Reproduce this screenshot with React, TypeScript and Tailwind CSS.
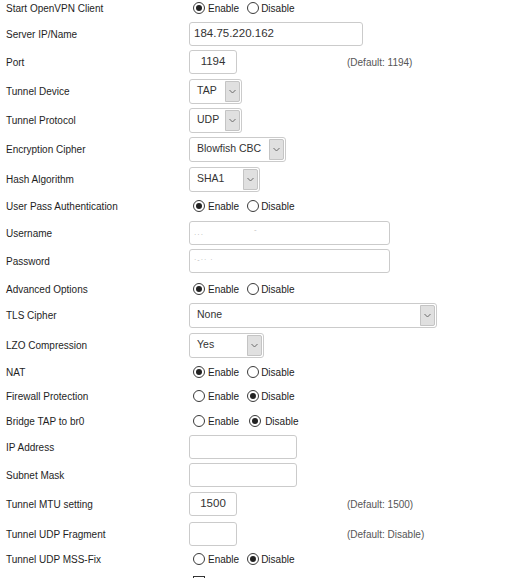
import React from 'react';

const Radio = ({ checked }: { checked: boolean }) => (
  <span className="w-[12px] h-[12px] rounded-full border border-[#3a3a3a] bg-white flex items-center justify-center shrink-0">
    {checked && <span className="w-[6px] h-[6px] rounded-full bg-[#222]"></span>}
  </span>
);

const RadioPair = ({ enabled, wide }: { enabled: boolean; wide?: boolean }) => (
  <div className="flex items-center pl-[4px] text-[10px] text-[#222]">
    <Radio checked={enabled} />
    <span className="ml-[3px]">Enable</span>
    <span className={wide ? 'ml-[10px] flex items-center' : 'ml-[8px] flex items-center'}>
      <Radio checked={!enabled} />
      <span className={wide ? 'ml-[4px]' : 'ml-[2px]'}>Disable</span>
    </span>
  </div>
);

const TextBox = ({ w, value, center, children }: { w: string; value?: string; center?: boolean; children?: React.ReactNode }) => (
  <div
    className={`${w} h-[24px] border border-[#cbcbcb] rounded-[3px] bg-white flex items-center text-[11.5px] text-[#333] ${
      center ? 'justify-center' : 'pl-[4px]'
    }`}
  >
    {value}
    {children}
  </div>
);

const Select = ({ w, value }: { w: string; value: string }) => (
  <div className={`${w} h-[25px] border border-[#cbcbcb] rounded-[3px] bg-white flex items-stretch text-[10.5px] text-[#333]`}>
    <div className="flex-1 flex items-center pl-[7px]">{value}</div>
    <div className="w-[15px] my-[1px] mr-[1px] bg-[#e0e0e0] border border-[#c4c4c4] rounded-r-[2px] flex items-center justify-center">
      <svg width="7" height="5" viewBox="0 0 7 5" fill="none" stroke="#6a6a6a" strokeWidth="1">
        <path d="M0.5 1 L3.5 4 L6.5 1" />
      </svg>
    </div>
  </div>
);

const Row = ({ h, label, hint, children }: { h: string; label: string; hint?: string; children?: React.ReactNode }) => (
  <div className={`${h} flex items-start`}>
    <div className="h-[24px] w-[189px] pl-[6px] flex items-center text-[10px] text-[#1e1e1e] shrink-0">{label}</div>
    <div className="h-[24px] w-[158px] flex items-center shrink-0">{children}</div>
    {hint && <div className="h-[24px] flex items-center text-[10px] text-[#555]">{hint}</div>}
  </div>
);

export default function App() {
  return (
    <div className="w-[522px] h-[578px] overflow-hidden bg-white font-['Liberation_Sans',Arial,sans-serif]">
      <div className="-mt-[4px]">
        <Row h="h-[26px]" label="Start OpenVPN Client">
          <RadioPair enabled />
        </Row>
        <Row h="h-[28px]" label="Server IP/Name">
          <div className="w-[174px] shrink-0">
            <TextBox w="w-[174px]" value="184.75.220.162" />
          </div>
        </Row>
        <Row h="h-[29px]" label="Port" hint="(Default: 1194)">
          <TextBox w="w-[48px]" value="1194" center />
        </Row>
        <Row h="h-[29px]" label="Tunnel Device">
          <Select w="w-[53px]" value="TAP" />
        </Row>
        <Row h="h-[29px]" label="Tunnel Protocol">
          <Select w="w-[53px]" value="UDP" />
        </Row>
        <Row h="h-[30px]" label="Encryption Cipher">
          <Select w="w-[97px]" value="Blowfish CBC" />
        </Row>
        <Row h="h-[27px]" label="Hash Algorithm">
          <Select w="w-[71px]" value="SHA1" />
        </Row>
        <Row h="h-[27px]" label="User Pass Authentication">
          <RadioPair enabled />
        </Row>
        <Row h="h-[28px]" label="Username">
          <div className="w-[201px] shrink-0">
            <TextBox w="w-[201px]">
              <span className="text-[7px] text-[#b0b0b0] tracking-[1px] mt-[4px]">···</span>
              <span className="ml-[50px] text-[8px] text-[#c0c0c0] -mt-[6px]">-</span>
            </TextBox>
          </div>
        </Row>
        <Row h="h-[28px]" label="Password">
          <div className="w-[201px] shrink-0">
            <TextBox w="w-[201px]">
              <span className="text-[7px] text-[#b8b8b8] tracking-[1px] -mt-[2px]">·-·· ·</span>
            </TextBox>
          </div>
        </Row>
        <Row h="h-[26px]" label="Advanced Options">
          <RadioPair enabled />
        </Row>
        <Row h="h-[30px]" label="TLS Cipher">
          <div className="w-[248px] shrink-0">
            <Select w="w-[248px]" value="None" />
          </div>
        </Row>
        <Row h="h-[27px]" label="LZO Compression">
          <Select w="w-[75px]" value="Yes" />
        </Row>
        <Row h="h-[24px]" label="NAT">
          <RadioPair enabled />
        </Row>
        <Row h="h-[25px]" label="Firewall Protection">
          <RadioPair enabled={false} />
        </Row>
        <Row h="h-[26px]" label="Bridge TAP to br0">
          <RadioPair enabled={false} wide />
        </Row>
        <Row h="h-[28px]" label="IP Address">
          <TextBox w="w-[108px]" />
        </Row>
        <Row h="h-[29px]" label="Subnet Mask">
          <TextBox w="w-[108px]" />
        </Row>
        <Row h="h-[30px]" label="Tunnel MTU setting" hint="(Default: 1500)">
          <TextBox w="w-[48px]" value="1500" center />
        </Row>
        <Row h="h-[25px]" label="Tunnel UDP Fragment" hint="(Default: Disable)">
          <TextBox w="w-[48px]" />
        </Row>
        <Row h="h-[23px]" label="Tunnel UDP MSS-Fix">
          <RadioPair enabled={false} />
        </Row>
        <div className="flex pl-[193px] pt-[6px]">
          <span className="w-[12px] h-[12px] border border-[#333] bg-white"></span>
        </div>
      </div>
    </div>
  );
}
